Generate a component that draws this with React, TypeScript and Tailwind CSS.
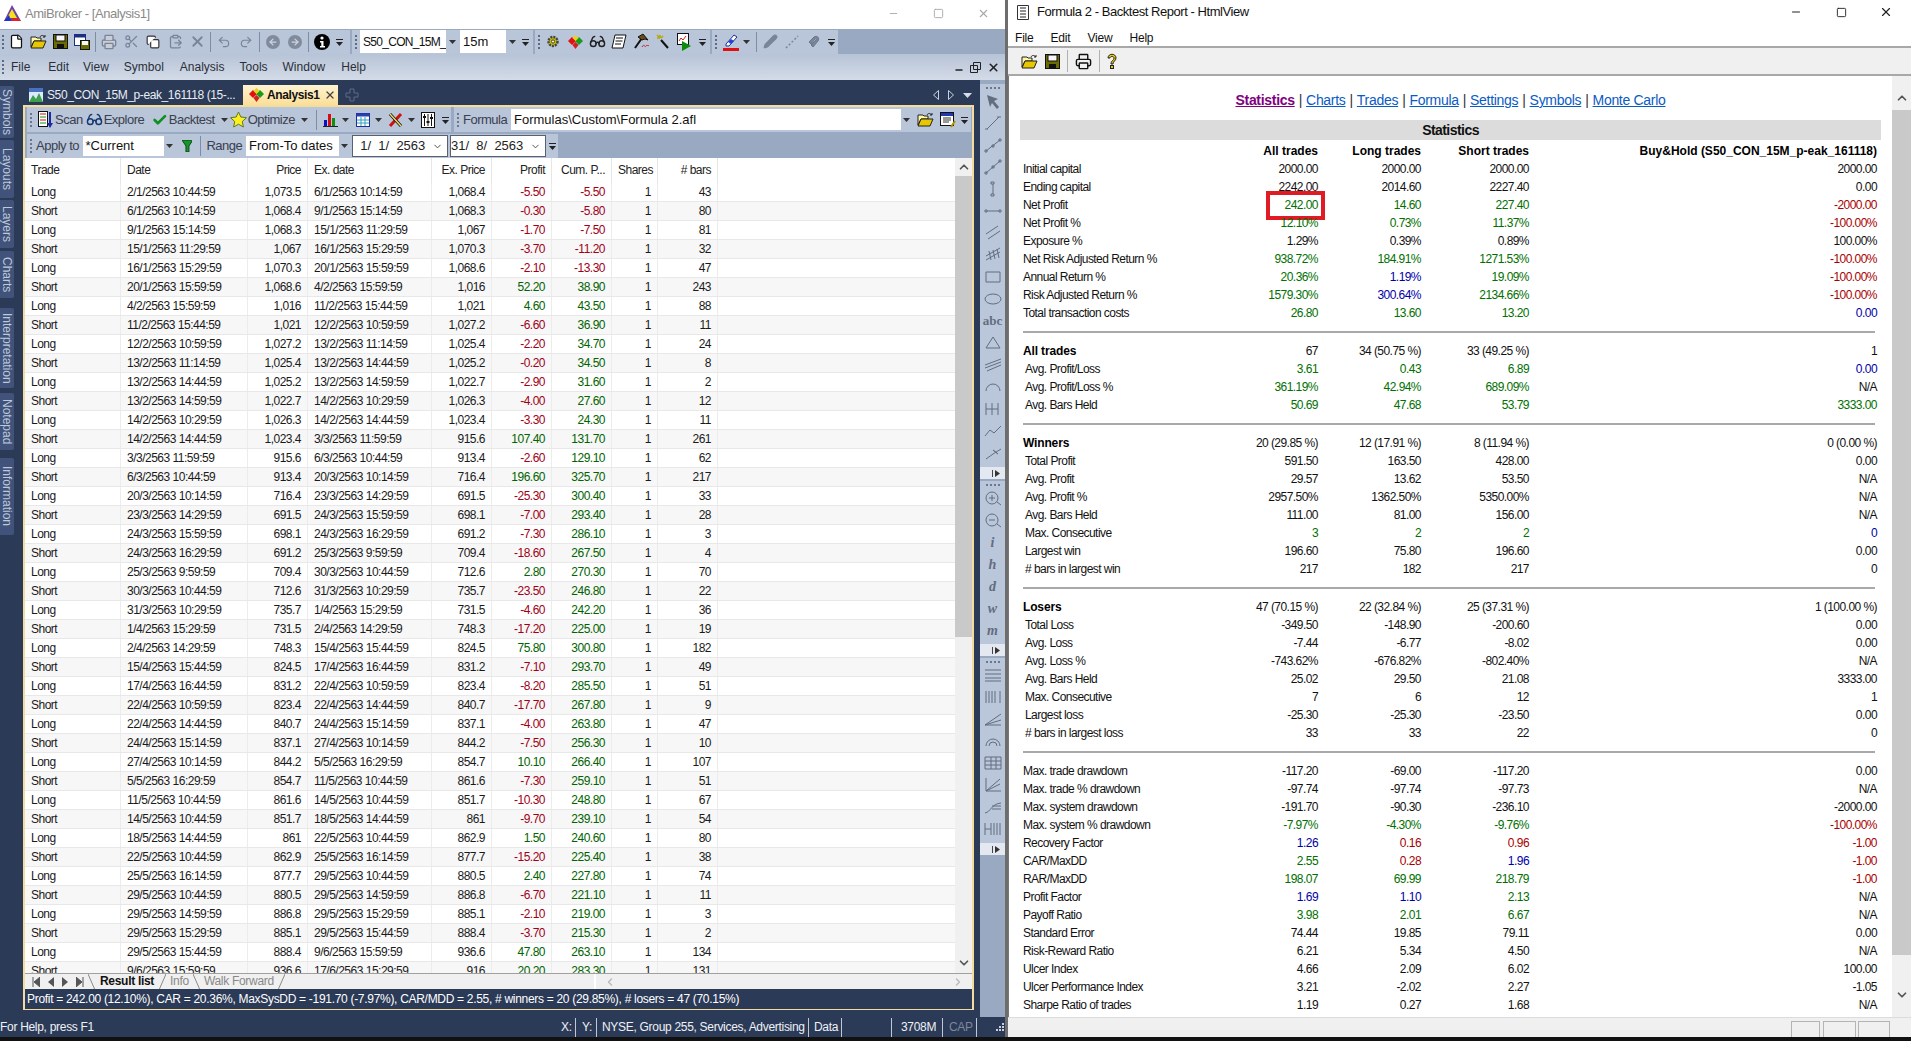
import type { ReactNode } from 'react'
import {
  ArrowLeft, ArrowRight, Check, ChevronDown, ChevronLeft, ChevronRight, ChevronUp, ClipboardPaste, Copy,
  File, Glasses, Minus, Pencil, Printer, Redo2, Scissors, Square, Undo2, X,
} from 'lucide-react'

type Trade = [string, string, string, string, string, string, string, string]

const TRADES: Trade[] = [
  ['Long', '2/1/2563 10:44:59', '1,073.5', '6/1/2563 10:14:59', '1,068.4', '-5.50', '-5.50', '43'],
  ['Short', '6/1/2563 10:14:59', '1,068.4', '9/1/2563 15:14:59', '1,068.3', '-0.30', '-5.80', '80'],
  ['Long', '9/1/2563 15:14:59', '1,068.3', '15/1/2563 11:29:59', '1,067', '-1.70', '-7.50', '81'],
  ['Short', '15/1/2563 11:29:59', '1,067', '16/1/2563 15:29:59', '1,070.3', '-3.70', '-11.20', '32'],
  ['Long', '16/1/2563 15:29:59', '1,070.3', '20/1/2563 15:59:59', '1,068.6', '-2.10', '-13.30', '47'],
  ['Short', '20/1/2563 15:59:59', '1,068.6', '4/2/2563 15:59:59', '1,016', '52.20', '38.90', '243'],
  ['Long', '4/2/2563 15:59:59', '1,016', '11/2/2563 15:44:59', '1,021', '4.60', '43.50', '88'],
  ['Short', '11/2/2563 15:44:59', '1,021', '12/2/2563 10:59:59', '1,027.2', '-6.60', '36.90', '11'],
  ['Long', '12/2/2563 10:59:59', '1,027.2', '13/2/2563 11:14:59', '1,025.4', '-2.20', '34.70', '24'],
  ['Short', '13/2/2563 11:14:59', '1,025.4', '13/2/2563 14:44:59', '1,025.2', '-0.20', '34.50', '8'],
  ['Long', '13/2/2563 14:44:59', '1,025.2', '13/2/2563 14:59:59', '1,022.7', '-2.90', '31.60', '2'],
  ['Short', '13/2/2563 14:59:59', '1,022.7', '14/2/2563 10:29:59', '1,026.3', '-4.00', '27.60', '12'],
  ['Long', '14/2/2563 10:29:59', '1,026.3', '14/2/2563 14:44:59', '1,023.4', '-3.30', '24.30', '11'],
  ['Short', '14/2/2563 14:44:59', '1,023.4', '3/3/2563 11:59:59', '915.6', '107.40', '131.70', '261'],
  ['Long', '3/3/2563 11:59:59', '915.6', '6/3/2563 10:44:59', '913.4', '-2.60', '129.10', '62'],
  ['Short', '6/3/2563 10:44:59', '913.4', '20/3/2563 10:14:59', '716.4', '196.60', '325.70', '217'],
  ['Long', '20/3/2563 10:14:59', '716.4', '23/3/2563 14:29:59', '691.5', '-25.30', '300.40', '33'],
  ['Short', '23/3/2563 14:29:59', '691.5', '24/3/2563 15:59:59', '698.1', '-7.00', '293.40', '28'],
  ['Long', '24/3/2563 15:59:59', '698.1', '24/3/2563 16:29:59', '691.2', '-7.30', '286.10', '3'],
  ['Short', '24/3/2563 16:29:59', '691.2', '25/3/2563 9:59:59', '709.4', '-18.60', '267.50', '4'],
  ['Long', '25/3/2563 9:59:59', '709.4', '30/3/2563 10:44:59', '712.6', '2.80', '270.30', '70'],
  ['Short', '30/3/2563 10:44:59', '712.6', '31/3/2563 10:29:59', '735.7', '-23.50', '246.80', '22'],
  ['Long', '31/3/2563 10:29:59', '735.7', '1/4/2563 15:29:59', '731.5', '-4.60', '242.20', '36'],
  ['Short', '1/4/2563 15:29:59', '731.5', '2/4/2563 14:29:59', '748.3', '-17.20', '225.00', '19'],
  ['Long', '2/4/2563 14:29:59', '748.3', '15/4/2563 15:44:59', '824.5', '75.80', '300.80', '182'],
  ['Short', '15/4/2563 15:44:59', '824.5', '17/4/2563 16:44:59', '831.2', '-7.10', '293.70', '49'],
  ['Long', '17/4/2563 16:44:59', '831.2', '22/4/2563 10:59:59', '823.4', '-8.20', '285.50', '51'],
  ['Short', '22/4/2563 10:59:59', '823.4', '22/4/2563 14:44:59', '840.7', '-17.70', '267.80', '9'],
  ['Long', '22/4/2563 14:44:59', '840.7', '24/4/2563 15:14:59', '837.1', '-4.00', '263.80', '47'],
  ['Short', '24/4/2563 15:14:59', '837.1', '27/4/2563 10:14:59', '844.2', '-7.50', '256.30', '10'],
  ['Long', '27/4/2563 10:14:59', '844.2', '5/5/2563 16:29:59', '854.7', '10.10', '266.40', '107'],
  ['Short', '5/5/2563 16:29:59', '854.7', '11/5/2563 10:44:59', '861.6', '-7.30', '259.10', '51'],
  ['Long', '11/5/2563 10:44:59', '861.6', '14/5/2563 10:44:59', '851.7', '-10.30', '248.80', '67'],
  ['Short', '14/5/2563 10:44:59', '851.7', '18/5/2563 14:44:59', '861', '-9.70', '239.10', '54'],
  ['Long', '18/5/2563 14:44:59', '861', '22/5/2563 10:44:59', '862.9', '1.50', '240.60', '80'],
  ['Short', '22/5/2563 10:44:59', '862.9', '25/5/2563 16:14:59', '877.7', '-15.20', '225.40', '38'],
  ['Long', '25/5/2563 16:14:59', '877.7', '29/5/2563 10:44:59', '880.5', '2.40', '227.80', '74'],
  ['Short', '29/5/2563 10:44:59', '880.5', '29/5/2563 14:59:59', '886.8', '-6.70', '221.10', '11'],
  ['Long', '29/5/2563 14:59:59', '886.8', '29/5/2563 15:29:59', '885.1', '-2.10', '219.00', '3'],
  ['Short', '29/5/2563 15:29:59', '885.1', '29/5/2563 15:44:59', '888.4', '-3.70', '215.30', '2'],
  ['Long', '29/5/2563 15:44:59', '888.4', '9/6/2563 15:59:59', '936.6', '47.80', '263.10', '134'],
  ['Short', '9/6/2563 15:59:59', '936.6', '17/6/2563 15:29:59', '916', '20.20', '283.30', '131'],
]

const COLS = 'grid grid-cols-[96px_127px_60px_124px_60px_60px_60px_46px_60px_1fr]'
const RED = 'text-[#a00018]'
const GREEN = 'text-[#006400]'

function signColor(v: string) {
  return v.startsWith('-') ? RED : GREEN
}

function TradeRow({ t, index }: { t: Trade; index: number }) {
  const cell = 'px-[6px] border-r border-[#ececec] leading-[18px] whitespace-nowrap'
  return (
    <div className={`${COLS} h-[19px] shrink-0 border-b border-[#e8e8e8] text-[#1a1a1a] ${index % 2 ? 'bg-[#f7f7f7]' : 'bg-white'}`}>
      <div className={cell}>{t[0]}</div>
      <div className={cell}>{t[1]}</div>
      <div className={`${cell} text-right`}>{t[2]}</div>
      <div className={cell}>{t[3]}</div>
      <div className={`${cell} text-right`}>{t[4]}</div>
      <div className={`${cell} text-right ${signColor(t[5])}`}>{t[5]}</div>
      <div className={`${cell} text-right ${signColor(t[6])}`}>{t[6]}</div>
      <div className={`${cell} text-right`}>1</div>
      <div className={`${cell} text-right`}>{t[7]}</div>
      <div />
    </div>
  )
}

function Grip({ dark }: { dark?: boolean }) {
  return (
    <span className="flex w-[2px] shrink-0 flex-col gap-[2px]">
      {[0, 1, 2, 3].map((i) => (
        <span key={i} className={`h-[2px] w-[2px] ${dark ? 'bg-[#5d6a82]' : 'bg-[#6a778f]'}`} />
      ))}
    </span>
  )
}

function Overflow() {
  return (
    <svg width="10" height="12" viewBox="0 0 10 12" className="shrink-0">
      <rect x="1" y="3" width="7" height="1" fill="#222" />
      <path d="M1 6h7L4.5 10z" fill="#222" />
    </svg>
  )
}

function Caret({ className = '' }: { className?: string }) {
  return (
    <svg width="7" height="4" viewBox="0 0 7 4" className={`shrink-0 ${className}`}>
      <path d="M0 0h7L3.5 4z" fill="#333" />
    </svg>
  )
}

function Btn({ children, w = 'w-[22px]' }: { children: ReactNode; w?: string }) {
  return <span className={`flex h-[22px] ${w} shrink-0 items-center justify-center`}>{children}</span>
}

function Sep() {
  return <span className="mx-[2px] block h-[20px] w-[1px] shrink-0 bg-[#7f8ca3]" />
}

function FolderIcon() {
  return (
    <svg width="17" height="15" viewBox="0 0 17 15">
      <path d="M1 13V3h5l1 1h4v3H4z" fill="#fff6a8" stroke="#222" />
      <path d="M1 14l3-7h12l-3 7z" fill="#e6c700" stroke="#222" />
      <path d="M10 3c1-2 3-2 5 0M15 3v-2M15 3h-2" fill="none" stroke="#222" />
    </svg>
  )
}

function SaveIcon() {
  return (
    <svg width="15" height="15" viewBox="0 0 15 15">
      <rect x="0.5" y="0.5" width="14" height="14" fill="#6b6b00" stroke="#111" />
      <rect x="3" y="1" width="9" height="6" fill="#f6f6f6" stroke="#111" />
      <rect x="4" y="10" width="7" height="4" fill="#111" />
    </svg>
  )
}

function SaveAllIcon() {
  return (
    <svg width="16" height="16" viewBox="0 0 16 16">
      <rect x="0.5" y="0.5" width="11" height="11" fill="#fff" stroke="#1c2f80" />
      <rect x="0.5" y="0.5" width="11" height="3" fill="#1c2f80" />
      <rect x="6.5" y="6.5" width="9" height="9" fill="#6b6b00" stroke="#111" />
      <rect x="8" y="7" width="6" height="4" fill="#f6f6f6" />
    </svg>
  )
}

function InfoIcon() {
  return (
    <svg width="16" height="16" viewBox="0 0 16 16">
      <circle cx="8" cy="8" r="8" fill="#000" />
      <circle cx="8" cy="4" r="1.6" fill="#fff" />
      <path d="M6 7h3.5v5H11v1.5H6V12h1.3V8.5H6z" fill="#fff" />
    </svg>
  )
}

function CircleArrow({ right }: { right?: boolean }) {
  return (
    <span className="flex h-[14px] w-[14px] items-center justify-center rounded-full bg-[#808b9d]">
      {right ? <ArrowRight size={10} color="#cfd6e2" strokeWidth={3} /> : <ArrowLeft size={10} color="#cfd6e2" strokeWidth={3} />}
    </span>
  )
}

function LogoIcon() {
  return (
    <svg width="17" height="18" viewBox="0 0 17 18">
      <path d="M8 0l9 16H0z" fill="#6b3fb0" />
      <path d="M8 4l5 9H3z" fill="#f4e11c" />
      <path d="M0 16l5-6 2 6z" fill="#2233c8" />
      <path d="M17 16H7l2-3h5z" fill="#e02424" />
    </svg>
  )
}

function DiamondsIcon() {
  return (
    <svg width="15" height="14" viewBox="0 0 15 14">
      <path d="M4 2l4 4-4 4-4-4z" fill="#e01010" />
      <path d="M11 2l4 4-4 4-4-4z" fill="#1a9a1a" />
      <path d="M7.5 0l3 3-3 3-3-3z" fill="#e8d020" />
      <path d="M7.5 7l3 3-3 4-3-4z" fill="#d02020" />
    </svg>
  )
}

function GearIcon() {
  return (
    <svg width="14" height="15" viewBox="0 0 14 15">
      <circle cx="7" cy="7.5" r="4.5" fill="#c7c200" stroke="#444" strokeDasharray="2 1" strokeWidth="2.4" />
      <circle cx="7" cy="7.5" r="1.6" fill="#eee" stroke="#444" />
    </svg>
  )
}

function ScrollIcon() {
  return (
    <svg width="16" height="16" viewBox="0 0 16 16">
      <path d="M4 1h11l-3 13H1z" fill="#fff" stroke="#111" />
      <path d="M5 4h7M4.5 7h7M4 10h6" stroke="#111" />
    </svg>
  )
}

function HammerIcon() {
  return (
    <svg width="17" height="17" viewBox="0 0 17 17">
      <path d="M2 15L9 5" stroke="#111" strokeWidth="2" />
      <path d="M5 4l5-3 5 6-3-1-3 1z" fill="#6b4a12" stroke="#111" />
      <path d="M9 14c2-4 3 1 4-1s2 1 3-1" fill="none" stroke="#d02020" />
    </svg>
  )
}

function WandIcon() {
  return (
    <svg width="14" height="15" viewBox="0 0 14 15">
      <path d="M5 6l7 8" stroke="#111" strokeWidth="2" />
      <path d="M4 1v3M1 4h3M7 2L5 4M1 1l2 2" stroke="#b8a800" strokeWidth="1.5" />
    </svg>
  )
}

function RunIcon() {
  return (
    <svg width="16" height="18" viewBox="0 0 16 18">
      <rect x="0.5" y="0.5" width="11" height="11" fill="#fff" stroke="#111" />
      <path d="M2 8l2-3 2 2 3-4" fill="none" stroke="#d02020" />
      <path d="M5 8l9 5-9 5z" fill="#0e8a0e" />
    </svg>
  )
}

function PenRedIcon() {
  return (
    <svg width="17" height="18" viewBox="0 0 17 18">
      <path d="M3 11l8-9 3 2-8 9H3z" fill="#fff" stroke="#1c2f9a" />
      <path d="M8 6l3 2-3 3-3-2z" fill="#2244d0" />
      <rect x="0" y="15" width="16" height="3" fill="#e01010" />
    </svg>
  )
}

function MagnetIcon() {
  return (
    <svg width="14" height="14" viewBox="0 0 14 14">
      <path d="M2 7l5-5c3-2 6 1 4 4l-5 6-2-2 5-5c1-1 0-2-1-1L4 9z" fill="#7a8699" stroke="#6a7589" />
    </svg>
  )
}

function ScanIcon() {
  return (
    <svg width="15" height="18" viewBox="0 0 15 18">
      <rect x="0.5" y="0.5" width="9" height="15" fill="#fff" stroke="#111" />
      <path d="M2 3h6" stroke="#d01010" />
      <path d="M2 6h6" stroke="#109010" />
      <path d="M2 9h6" stroke="#d01010" />
      <path d="M2 12h6" stroke="#109010" />
      <path d="M12 1v12" stroke="#1a2aa0" strokeWidth="2" />
      <path d="M9 12h6l-3 5z" fill="#1a2aa0" />
    </svg>
  )
}

function StarIcon() {
  return (
    <svg width="17" height="17" viewBox="0 0 17 17">
      <path d="M8.5 1l2.3 5 5.7.7-4.2 3.8 1.1 5.5-4.9-2.8-4.9 2.8 1.1-5.5L.5 6.7 6.2 6z" fill="#ffee20" stroke="#5b7a20" />
    </svg>
  )
}

function BarsIcon() {
  return (
    <svg width="15" height="15" viewBox="0 0 15 15">
      <rect x="1" y="8" width="3" height="6" fill="#1010c0" />
      <rect x="5" y="2" width="3" height="12" fill="#d01010" />
      <rect x="9" y="6" width="3" height="8" fill="#109010" />
      <rect x="0" y="14" width="15" height="1" fill="#222" />
    </svg>
  )
}

function TableIcon() {
  return (
    <svg width="14" height="14" viewBox="0 0 14 14">
      <rect x="0.5" y="0.5" width="13" height="13" fill="#fff" stroke="#1c2f9a" />
      <rect x="0.5" y="0.5" width="13" height="3" fill="#2a3fb0" />
      <path d="M5 4v9M9 4v9M1 7h12M1 10h12" stroke="#30a0c0" />
    </svg>
  )
}

function ToolsIcon() {
  return (
    <svg width="18" height="18" viewBox="0 0 18 18">
      <path d="M3 15L14 3" stroke="#d01010" strokeWidth="3" />
      <path d="M3 3l11 12" stroke="#111" strokeWidth="3" />
      <path d="M3 3l11 12" stroke="#f0e060" strokeWidth="1.4" />
    </svg>
  )
}

function SlidersIcon() {
  return (
    <svg width="14" height="16" viewBox="0 0 14 16">
      <rect x="0.5" y="0.5" width="13" height="15" fill="#fff" stroke="#111" />
      <path d="M3.5 2v12M7 2v12M10.5 2v12" stroke="#111" />
      <path d="M2 5h3M5.500 10h3M9 6h3" stroke="#111" strokeWidth="2" />
    </svg>
  )
}

function EditIcon() {
  return (
    <svg width="16" height="16" viewBox="0 0 16 16">
      <rect x="0.5" y="0.5" width="13" height="13" fill="#fff" stroke="#111" />
      <rect x="1" y="1" width="12" height="3" fill="#2238b0" />
      <path d="M3 6h8M3 8h8M3 10h6" stroke="#333" />
      <path d="M11 15l4-6" stroke="#b09000" strokeWidth="2" />
    </svg>
  )
}

function Field({ children, w }: { children: ReactNode; w: string }) {
  return (
    <span className={`flex h-[20px] ${w} shrink-0 items-center bg-white pl-[3px] tracking-normal text-[#111]`}>
      <span className="flex-1 whitespace-nowrap">{children}</span>
      <span className="flex h-[20px] w-[11px] shrink-0 items-center justify-center bg-[#b9c5d8]">
        <Caret />
      </span>
    </span>
  )
}

function DateField({ value, w }: { value: string; w: string }) {
  return (
    <span className={`flex h-[22px] ${w} shrink-0 items-center border border-[#59606e] bg-white pr-[4px] whitespace-pre tracking-normal text-[#222]`}>
      <span className="flex-1">{value}</span>
      <ChevronDown size={11} color="#444" />
    </span>
  )
}

function TopToolbar() {
  const group = 'flex h-[24px] shrink-0 items-center bg-[#b9c5d8]'
  const gray = '#79849a'
  return (
    <div className="flex h-[25px] shrink-0 items-center gap-[2px] bg-[#9aa9c2]">
      <div className={`${group} w-[350px] pl-[2px]`}>
        <Grip dark />
        <span className="w-[1px]" />
        <Btn><File size={15} color="#111" fill="#fff" /></Btn>
        <Btn><FolderIcon /></Btn>
        <Btn><SaveIcon /></Btn>
        <Btn><SaveAllIcon /></Btn>
        <Sep />
        <Btn><Printer size={16} color={gray} fill="#c8cdd6" /></Btn>
        <Btn><Scissors size={15} color={gray} /></Btn>
        <Btn><Copy size={14} color="#333" fill="#fff" /></Btn>
        <Btn><ClipboardPaste size={15} color={gray} /></Btn>
        <Btn><X size={17} color={gray} strokeWidth={2.5} /></Btn>
        <Sep />
        <Btn><Undo2 size={14} color={gray} /></Btn>
        <Btn><Redo2 size={14} color={gray} /></Btn>
        <Sep />
        <Btn><CircleArrow /></Btn>
        <Btn><CircleArrow right /></Btn>
        <Sep />
        <Btn><InfoIcon /></Btn>
        <span className="ml-[2px]"><Overflow /></span>
      </div>
      <div className={`${group} w-[181px] pl-[3px]`}>
        <Grip dark />
        <span className="w-[3px]" />
        <span className="flex h-[23px] w-[98px] shrink-0 items-center bg-white pl-[3px] text-[12px] tracking-[-0.7px] text-[#111]">
          <span className="flex-1 whitespace-nowrap">S50_CON_15M_</span>
          <span className="flex h-[23px] w-[12px] shrink-0 items-center justify-center bg-[#b9c5d8]"><Caret /></span>
        </span>
        <span className="w-[2px]" />
        <span className="flex h-[23px] w-[58px] shrink-0 items-center bg-white pl-[3px] text-[13px] text-[#111]">
          <span className="flex-1">15m</span>
          <span className="flex h-[23px] w-[12px] shrink-0 items-center justify-center bg-[#b9c5d8]"><Caret /></span>
        </span>
        <span className="ml-[3px]"><Overflow /></span>
      </div>
      <div className={`${group} w-[175px] pl-[3px]`}>
        <Grip dark />
        <span className="w-[2px]" />
        <Btn><GearIcon /></Btn>
        <Btn><DiamondsIcon /></Btn>
        <Btn><Glasses size={17} color="#222" /></Btn>
        <Btn><ScrollIcon /></Btn>
        <Btn><HammerIcon /></Btn>
        <Btn><WandIcon /></Btn>
        <Btn><RunIcon /></Btn>
        <span className="ml-[2px]"><Overflow /></span>
      </div>
      <div className={`${group} w-[126px] pl-[3px]`}>
        <Grip dark />
        <span className="w-[3px]" />
        <Btn><PenRedIcon /></Btn>
        <Caret className="ml-[1px]" />
        <span className="w-[4px]" />
        <Sep />
        <Btn><Pencil size={15} color={gray} fill={gray} /></Btn>
        <Btn>
          <svg width="14" height="14" viewBox="0 0 14 14"><path d="M1 13L13 1" stroke={gray} strokeWidth="1.5" strokeDasharray="2 2" /></svg>
        </Btn>
        <Btn><MagnetIcon /></Btn>
        <span className="ml-[2px]"><Overflow /></span>
      </div>
    </div>
  )
}

function MenuBar() {
  const items: [string, string][] = [
    ['File', 'ml-[7px]'], ['Edit', 'ml-[18px]'], ['View', 'ml-[14px]'], ['Symbol', 'ml-[15px]'],
    ['Analysis', 'ml-[16px]'], ['Tools', 'ml-[15px]'], ['Window', 'ml-[15px]'], ['Help', 'ml-[16px]'],
  ]
  return (
    <div className="flex h-[26px] shrink-0 items-center bg-linear-to-b from-[#b7c3d7] to-[#d3dbe7] pl-[2px] text-[12px] text-[#2a2f3a]">
      <Grip dark />
      {items.map(([t, c]) => (
        <span key={t} className={c}>{t}</span>
      ))}
      <span className="ml-auto flex items-center gap-[6px] pr-[5px]">
        <Minus size={10} color="#222" strokeWidth={4} className="mt-[6px]" />
        <svg width="11" height="11" viewBox="0 0 11 11"><path d="M3.5 .5h7v7h-7zM.5 3.5h7v7h-7z" fill="none" stroke="#222" /></svg>
        <X size={13} color="#222" strokeWidth={3} />
      </span>
    </div>
  )
}

function SideTab({ label, h }: { label: string; h: string }) {
  return (
    <div className={`flex w-[14px] ${h} shrink-0 items-center justify-center rounded-r-[2px] bg-[#41537a] text-[12px] text-[#bcc8dc] [writing-mode:vertical-rl]`}>
      {label}
    </div>
  )
}

function SideRail() {
  return (
    <div className="flex w-[23px] shrink-0 flex-col pt-[6px]">
      <SideTab label="Symbols" h="h-[52px]" />
      <div className="h-[2px]" />
      <SideTab label="Layouts" h="h-[58px]" />
      <div className="h-[2px]" />
      <SideTab label="Layers" h="h-[48px]" />
      <div className="h-[3px]" />
      <SideTab label="Charts" h="h-[47px]" />
      <div className="h-[10px]" />
      <SideTab label="Interpretation" h="h-[80px]" />
      <div className="h-[5px]" />
      <SideTab label="Notepad" h="h-[57px]" />
      <div className="h-[8px]" />
      <SideTab label="Information" h="h-[77px]" />
    </div>
  )
}

function DocTabs() {
  return (
    <div className="flex h-[20px] shrink-0 items-center text-[12px] tracking-[-0.4px]">
      <svg width="14" height="14" viewBox="0 0 14 14" className="ml-[6px]">
        <rect width="14" height="14" fill="#dbeafe" />
        <rect width="14" height="4" fill="#4a70c0" />
        <path d="M0 14l4-7 3 4 3-6 4 9z" fill="#3aa04a" />
      </svg>
      <span className="ml-[4px] w-[196px] whitespace-nowrap text-[#e8ecf3]">S50_CON_15M_p-eak_161118 (15-...</span>
      <span className="flex h-[20px] w-[95px] items-center bg-linear-to-b from-[#fff3d0] to-[#fbdf98] pl-[6px] font-bold text-[#111]">
        <DiamondsIcon />
        <span className="ml-[3px]">Analysis1</span>
        <X size={12} color="#444" className="ml-[5px]" strokeWidth={2.5} />
      </span>
      <svg width="14" height="14" viewBox="0 0 14 14" className="ml-[7px]">
        <path d="M5 1h4v4h4v4H9v4H5V9H1V5h4z" fill="none" stroke="#5b6a88" />
      </svg>
      <span className="ml-auto flex items-center gap-[9px] pr-[2px]">
        <svg width="6" height="10" viewBox="0 0 6 10"><path d="M5.5 .5v9L.5 5z" fill="none" stroke="#c8d0de" /></svg>
        <svg width="6" height="10" viewBox="0 0 6 10"><path d="M.5 .5v9l5-4.500z" fill="none" stroke="#c8d0de" /></svg>
        <svg width="9" height="5" viewBox="0 0 9 5"><path d="M0 0h9L4.500 5z" fill="#d6dde8" /></svg>
      </span>
    </div>
  )
}

function PanelToolbars() {
  const group = 'flex shrink-0 items-center bg-[#b9c5d8] text-[#39404f]'
  return (
    <div className="flex h-[51px] shrink-0 flex-col gap-[2px] bg-[#9aa9c2] pl-[2px] text-[13px] tracking-[-0.5px]">
      <div className="flex h-[25px] gap-[3px]">
        <div className={`${group} w-[424px] pl-[3px]`}>
          <Grip />
          <span className="ml-[6px]"><ScanIcon /></span>
          <span className="ml-[2px]">Scan</span>
          <span className="ml-[3px]"><Glasses size={17} color="#163a70" /></span>
          <span className="ml-[1px]">Explore</span>
          <Check size={18} color="#0f8f20" strokeWidth={4} className="ml-[8px]" />
          <span className="ml-[1px]">Backtest</span>
          <Caret className="ml-[6px]" />
          <span className="ml-[2px]"><StarIcon /></span>
          <span className="ml-[1px]">Optimize</span>
          <Caret className="ml-[6px]" />
          <span className="ml-[6px]"><Sep /></span>
          <span className="ml-[4px]"><BarsIcon /></span>
          <Caret className="ml-[4px]" />
          <span className="ml-[7px]"><TableIcon /></span>
          <Caret className="ml-[5px]" />
          <span className="ml-[5px]"><ToolsIcon /></span>
          <Caret className="ml-[3px]" />
          <span className="ml-[6px]"><SlidersIcon /></span>
          <span className="ml-[6px]"><Overflow /></span>
        </div>
        <div className={`${group} w-[517px] pl-[3px]`}>
          <Grip />
          <span className="ml-[4px] w-[48px]">Formula</span>
          <span className="flex h-[21px] w-[401px] shrink-0 items-center bg-white pl-[3px] tracking-normal text-[#111]">
            <span className="flex-1">Formulas\Custom\Formula 2.afl</span>
            <span className="flex h-[21px] w-[11px] items-center justify-center bg-[#b9c5d8]"><Caret /></span>
          </span>
          <span className="ml-[5px]"><FolderIcon /></span>
          <span className="ml-[6px]"><EditIcon /></span>
          <span className="ml-[4px]"><Overflow /></span>
        </div>
      </div>
      <div className={`${group} h-[24px] w-[531px] pl-[3px]`}>
        <Grip />
        <span className="ml-[4px] w-[47px] whitespace-nowrap">Apply to</span>
        <Field w="w-[92px]">*Current</Field>
        <svg width="11" height="12" viewBox="0 0 11 12" className="ml-[7px]">
          <path d="M0 0h11L7 6v6H4V6z" fill="#14962a" stroke="#0a4a12" />
        </svg>
        <span className="ml-[6px]"><Sep /></span>
        <span className="ml-[3px] w-[40px]">Range</span>
        <Field w="w-[104px]">From-To dates</Field>
        <span className="w-[2px]" />
        <DateField w="w-[96px]" value="  1/  1/  2563" />
        <span className="w-[2px]" />
        <DateField w="w-[96px]" value="31/  8/  2563" />
        <span className="ml-[2px]"><Overflow /></span>
      </div>
    </div>
  )
}

function TableHeader() {
  const cell = 'px-[6px] border-r border-[#e6e6e6] leading-[25px] whitespace-nowrap'
  return (
    <div className={`${COLS} h-[25px] shrink-0 bg-white text-[#222]`}>
      <div className={cell}>Trade</div>
      <div className={cell}>Date</div>
      <div className={`${cell} text-right`}>Price</div>
      <div className={cell}>Ex. date</div>
      <div className={`${cell} text-right`}>Ex. Price</div>
      <div className={`${cell} text-right`}>Profit</div>
      <div className={`${cell} text-right`}>Cum. P...</div>
      <div className={`${cell} text-right`}>Shares</div>
      <div className={`${cell} text-right`}>{'# bars'}</div>
      <div />
    </div>
  )
}

function VScroll({ w, top, thumb, bottom }: { w: string; top: string; thumb: string; bottom: string }) {
  return (
    <div className={`flex ${w} shrink-0 flex-col items-center bg-[#f0f0f0]`}>
      <div className={`flex ${top} shrink-0 items-center`}><ChevronUp size={14} color="#555" strokeWidth={3} /></div>
      <div className={`w-full ${thumb} shrink-0 bg-[#c9c9c9]`} />
      <div className="flex-1" />
      <div className={`flex ${bottom} shrink-0 items-center`}><ChevronDown size={14} color="#555" strokeWidth={3} /></div>
    </div>
  )
}

function TabEdge({ flip }: { flip?: boolean }) {
  return (
    <svg width="7" height="16" viewBox="0 0 7 16" className="shrink-0">
      <path d={flip ? 'M7 0L0 16' : 'M0 0l7 16'} stroke="#8a8a8a" fill="none" />
    </svg>
  )
}

function BottomTabs() {
  return (
    <div className="flex h-[16px] shrink-0 items-center border-t border-[#a0a0a0] bg-[#f0f0f0] text-[12px] leading-[13px] tracking-[-0.3px]">
      <div className="ml-[3px] flex w-[60px] items-center justify-around text-[#444]">
        <svg width="8" height="10" viewBox="0 0 8 10"><path d="M1 0v10M8 0v10L2 5z" stroke="#555" fill="#555" /></svg>
        <svg width="6" height="10" viewBox="0 0 6 10"><path d="M6 0v10L0 5z" fill="#555" /></svg>
        <svg width="6" height="10" viewBox="0 0 6 10"><path d="M0 0v10l6-5z" fill="#555" /></svg>
        <svg width="8" height="10" viewBox="0 0 8 10"><path d="M7 0v10M0 0v10l6-5z" stroke="#555" fill="#555" /></svg>
      </div>
      <TabEdge />
      <span className="mx-[5px] font-bold text-[#111]">Result list</span>
      <TabEdge flip />
      <span className="mx-[4px] text-[#888]">Info</span>
      <TabEdge />
      <span className="mx-[4px] text-[#888]">Walk Forward</span>
      <TabEdge flip />
      <div className="ml-auto flex h-[16px] w-[378px] items-center justify-between border-l-2 border-white px-[8px]">
        <ChevronLeft size={12} color="#bbb" strokeWidth={3} />
        <ChevronRight size={12} color="#bbb" strokeWidth={3} />
      </div>
    </div>
  )
}

function Panel() {
  return (
    <div className="flex min-h-0 w-[951px] flex-1 flex-col border-2 border-b-[1px] border-[#f4dc9c] text-[12px] tracking-[-0.5px]">
      <PanelToolbars />
      <div className="flex min-h-0 flex-1">
        <div className="flex min-h-0 w-[930px] shrink-0 flex-col overflow-hidden bg-white">
          <TableHeader />
          {TRADES.map((t, i) => (
            <TradeRow key={t[1]} t={t} index={i} />
          ))}
        </div>
        <VScroll w="w-[17px]" top="h-[18px]" thumb="h-[461px]" bottom="h-[20px]" />
      </div>
      <BottomTabs />
      <div className="flex h-[20px] shrink-0 items-center bg-[#2b3a57] pl-[2px] whitespace-nowrap text-[12px] tracking-[-0.3px] text-white">
        Profit = 242.00 (12.10%), CAR = 20.36%, MaxSysDD = -191.70 (-7.97%), CAR/MDD = 2.55, # winners = 20 (29.85%), # losers = 47 (70.15%)
      </div>
    </div>
  )
}

function RailLine({ d }: { d: string }) {
  return (
    <span className="flex h-[22px] items-center justify-center">
      <svg width="18" height="16" viewBox="0 0 18 16">
        <path d={d} fill="none" stroke="#626d80" />
      </svg>
    </span>
  )
}

function RailText({ t, bold }: { t: string; bold?: boolean }) {
  return (
    <span className={`flex h-[22px] items-center justify-center text-[#626d80] ${bold ? "font-['Liberation_Serif',serif] text-[13px] font-bold" : "font-['Liberation_Serif',serif] text-[14px] font-bold italic"}`}>
      {t}
    </span>
  )
}

function RailFoot() {
  return (
    <div className="mt-[3px] flex h-[12px] items-center justify-end gap-[2px] bg-[#e4e9f1] pr-[5px]">
      <span className="h-[7px] w-[1px] bg-[#444]" />
      <svg width="5" height="7" viewBox="0 0 5 7"><path d="M0 0v7l5-3.500z" fill="#333" /></svg>
    </div>
  )
}

function RailDots() {
  return (
    <div className="flex h-[6px] items-center justify-center gap-[2px] pt-[2px]">
      {[0, 1, 2, 3].map((i) => (
        <span key={i} className="h-[2px] w-[2px] bg-[#6a778f]" />
      ))}
    </div>
  )
}

const DRAW_A = [
  'M3 14L15 2M1 14h3M13 2h4',
  'M2 14l14-11M1 13h2v2H1zM8 8h2v2H8zM15 2h2v2h-2z',
  'M2 14l14-12M1 13h2v2H1zM8 7h2v2H8zM15 1h2v2h-2z',
  'M9 3v10M7 1h3v2H7zM7 13h3v2H7z',
  'M3 8h12M1 7h2v2H1zM15 7h2v2h-2z',
  'M2 9L14 1M4 14L16 6',
  'M2 13L16 5M2 9l14-8M5 4l2 9M9 3l2 9M13 2l2 9',
  'M2 3h14v10H2z',
  'M1 8a8 5 0 1 0 16 0a8 5 0 1 0-16 0',
]
const DRAW_B = [
  'M2 13L9 2l7 11z',
  'M1 11l16-6M1 8l16-6M3 14l14-6',
  'M2 12a7 7 0 0 1 14 0',
  'M2 2v12M8 2v12M14 2v12M2 8h12',
  'M1 13l5-6 4 3 7-7',
  'M2 14l7-5M9 9l8-5M9 5l5 4z',
]
const DRAW_C = [
  'M1 3h16M1 7h16M1 11h16M1 14h16',
  'M2 2v12M5 2v12M8 2v12M11 2v12M16 2v12',
  'M1 14L17 3M1 14l16-5M1 14h16',
  'M2 13a7 7 0 0 1 14 0M5 13a4 4 0 0 1 8 0',
  'M1 2h16v12H1zM1 6h16M1 10h16M7 2v12M12 2v12',
  'M2 1v13h15M2 14L16 2M2 14l14-7',
  'M1 14c6-1 6-9 16-10M8 7h9M8 10h9',
  'M1 2v12M1 8h6M7 2v12M10 2v12M13 2v12M16 2v12',
]

function DrawRail() {
  return (
    <div className="flex w-[25px] shrink-0 flex-col gap-[2px] bg-[#9aa9c2] pt-[4px]">
      <div className="bg-[#bac6d9]">
        <RailDots />
        <span className="flex h-[22px] items-center justify-center">
          <svg width="18" height="18" viewBox="0 0 18 18"><path d="M3 3l11 4-4 2 5 6-2 2-5-6-2 4z" fill="#626d80" /></svg>
        </span>
        {DRAW_A.map((d) => <RailLine key={d} d={d} />)}
        <RailText t="abc" bold />
        {DRAW_B.map((d) => <RailLine key={d} d={d} />)}
        <RailFoot />
      </div>
      <div className="bg-[#bac6d9]">
        <RailDots />
        <RailLine d="M2 8a6 6 0 1 0 12 0a6 6 0 1 0-12 0M5 8h6M8 5v6M13 12l4 3" />
        <RailLine d="M2 8a6 6 0 1 0 12 0a6 6 0 1 0-12 0M5 8h6M13 12l4 3" />
        {['i', 'h', 'd', 'w', 'm'].map((t) => <RailText key={t} t={t} />)}
        <RailFoot />
      </div>
      <div className="bg-[#bac6d9]">
        <RailDots />
        {DRAW_C.map((d) => <RailLine key={d} d={d} />)}
        <RailFoot />
      </div>
    </div>
  )
}

function LeftStatus() {
  const sep = 'flex h-[19px] items-center border-r border-[#c0c8d6]'
  return (
    <div className="flex h-[20px] shrink-0 items-center bg-[#2b3a57] text-[12px] tracking-[-0.3px] text-[#eef1f6]">
      <span className="w-[561px] shrink-0 whitespace-nowrap">For Help, press F1</span>
      <span className={`${sep} w-[15px]`}>X:</span>
      <span className={`${sep} w-[21px] pl-[6px]`}>Y:</span>
      <span className={`${sep} w-[212px] whitespace-nowrap pl-[5px]`}>NYSE, Group 255, Services, Advertising</span>
      <span className={`${sep} w-[33px] pl-[5px]`}>Data</span>
      <span className={`${sep} w-[50px]`} />
      <span className={`${sep} w-[51px] pl-[9px]`}>3708M</span>
      <span className={`${sep} w-[34px] pl-[6px] text-[#7c879b]`}>CAP</span>
      <span className="ml-auto grid grid-cols-3 gap-[1px] pr-[1px]">
        {[0, 1, 2, 3, 4, 5, 6, 7, 8].map((i) => (
          <span key={i} className={`h-[2px] w-[2px] ${[0, 1, 3].includes(i) ? '' : 'bg-[#c8d0de]'}`} />
        ))}
      </span>
    </div>
  )
}

function LeftWindow() {
  return (
    <div className="flex h-full w-[1005px] shrink-0 flex-col">
      <div className="flex h-[29px] shrink-0 items-center bg-white pb-[2px] pl-[4px] text-[13px] tracking-[-0.45px] text-[#8a8a8a]">
        <LogoIcon />
        <span className="ml-[4px]">AmiBroker - [Analysis1]</span>
        <span className="ml-auto flex items-center pr-[15px] text-[#a8a8a8]">
          <Minus size={11} />
          <Square size={11} className="ml-[34px]" />
          <X size={13} className="ml-[33px]" />
        </span>
      </div>
      <TopToolbar />
      <MenuBar />
      <div className="flex min-h-0 flex-1 bg-[#2b3a57]">
        <SideRail />
        <div className="flex min-h-0 w-[951px] shrink-0 flex-col pt-[5px] pb-[7px]">
          <DocTabs />
          <Panel />
        </div>
        <div className="w-[6px] shrink-0" />
        <DrawRail />
      </div>
      <LeftStatus />
    </div>
  )
}

type Tone = 'g' | 'b' | 'r' | ''
type Val = string | [string, Tone]
const g = (s: string): Val => [s, 'g']
const b = (s: string): Val => [s, 'b']
const r = (s: string): Val => [s, 'r']

type StatRow = [string, Val, Val, Val, Val]

const STATS_A: StatRow[] = [
  ['Initial capital', '2000.00', '2000.00', '2000.00', '2000.00'],
  ['Ending capital', '2242.00', '2014.60', '2227.40', '0.00'],
  ['Net Profit', g('242.00'), g('14.60'), g('227.40'), r('-2000.00')],
  ['Net Profit %', g('12.10%'), g('0.73%'), g('11.37%'), r('-100.00%')],
  ['Exposure %', '1.29%', '0.39%', '0.89%', '100.00%'],
  ['Net Risk Adjusted Return %', g('938.72%'), g('184.91%'), g('1271.53%'), r('-100.00%')],
  ['Annual Return %', g('20.36%'), b('1.19%'), g('19.09%'), r('-100.00%')],
  ['Risk Adjusted Return %', g('1579.30%'), b('300.64%'), g('2134.66%'), r('-100.00%')],
  ['Total transaction costs', g('26.80'), g('13.60'), g('13.20'), b('0.00')],
]
const STATS_B: StatRow[] = [
  ['All trades', '67', '34 (50.75 %)', '33 (49.25 %)', '1'],
  ['Avg. Profit/Loss', g('3.61'), g('0.43'), g('6.89'), b('0.00')],
  ['Avg. Profit/Loss %', g('361.19%'), g('42.94%'), g('689.09%'), 'N/A'],
  ['Avg. Bars Held', g('50.69'), g('47.68'), g('53.79'), g('3333.00')],
]
const STATS_C: StatRow[] = [
  ['Winners', '20 (29.85 %)', '12 (17.91 %)', '8 (11.94 %)', '0 (0.00 %)'],
  ['Total Profit', '591.50', '163.50', '428.00', '0.00'],
  ['Avg. Profit', '29.57', '13.62', '53.50', 'N/A'],
  ['Avg. Profit %', '2957.50%', '1362.50%', '5350.00%', 'N/A'],
  ['Avg. Bars Held', '111.00', '81.00', '156.00', 'N/A'],
  ['Max. Consecutive', g('3'), g('2'), g('2'), b('0')],
  ['Largest win', '196.60', '75.80', '196.60', '0.00'],
  ['# bars in largest win', '217', '182', '217', '0'],
]
const STATS_D: StatRow[] = [
  ['Losers', '47 (70.15 %)', '22 (32.84 %)', '25 (37.31 %)', '1 (100.00 %)'],
  ['Total Loss', '-349.50', '-148.90', '-200.60', '0.00'],
  ['Avg. Loss', '-7.44', '-6.77', '-8.02', '0.00'],
  ['Avg. Loss %', '-743.62%', '-676.82%', '-802.40%', 'N/A'],
  ['Avg. Bars Held', '25.02', '29.50', '21.08', '3333.00'],
  ['Max. Consecutive', '7', '6', '12', '1'],
  ['Largest loss', '-25.30', '-25.30', '-23.50', '0.00'],
  ['# bars in largest loss', '33', '33', '22', '0'],
]
const STATS_E: StatRow[] = [
  ['Max. trade drawdown', '-117.20', '-69.00', '-117.20', '0.00'],
  ['Max. trade % drawdown', '-97.74', '-97.74', '-97.73', 'N/A'],
  ['Max. system drawdown', '-191.70', '-90.30', '-236.10', '-2000.00'],
  ['Max. system % drawdown', g('-7.97%'), g('-4.30%'), g('-9.76%'), r('-100.00%')],
  ['Recovery Factor', b('1.26'), r('0.16'), r('0.96'), r('-1.00')],
  ['CAR/MaxDD', g('2.55'), r('0.28'), b('1.96'), r('-1.00')],
  ['RAR/MaxDD', g('198.07'), g('69.99'), g('218.79'), r('-1.00')],
  ['Profit Factor', b('1.69'), b('1.10'), g('2.13'), 'N/A'],
  ['Payoff Ratio', g('3.98'), g('2.01'), g('6.67'), 'N/A'],
  ['Standard Error', '74.44', '19.85', '79.11', '0.00'],
  ['Risk-Reward Ratio', '6.21', '5.34', '4.50', 'N/A'],
  ['Ulcer Index', '4.66', '2.09', '6.02', '100.00'],
  ['Ulcer Performance Index', '3.21', '-2.02', '2.27', '-1.05'],
  ['Sharpe Ratio of trades', '1.19', '0.27', '1.68', 'N/A'],
]

const TONES: Record<Tone, string> = {
  g: 'text-[#007000]',
  b: 'text-[#0000a8]',
  r: 'text-[#a80000]',
  '': 'text-[#111]',
}

function StatCell({ v, w, children }: { v: Val; w: string; children?: ReactNode }) {
  const [text, tone] = typeof v === 'string' ? [v, '' as Tone] : v
  return (
    <div className={`relative ${w} shrink-0 text-right ${TONES[tone]}`}>
      {text}
      {children}
    </div>
  )
}

function Stat({ row, head, indent }: { row: StatRow; head?: boolean; indent?: boolean }) {
  return (
    <div className="flex h-[18px] leading-[18px] whitespace-nowrap">
      <div className={`w-[175px] shrink-0 ${head ? 'font-bold tracking-[-0.15px] text-black' : 'text-[#111]'} ${indent ? 'pl-[2px]' : ''}`}>{row[0]}</div>
      <StatCell v={row[1]} w="w-[120px]">
        {row[0] === 'Net Profit' && (
          <div className="absolute top-[-5px] right-[-7px] h-[29px] w-[59px] border-[4px] border-[#e01b24]" />
        )}
      </StatCell>
      <StatCell v={row[2]} w="w-[103px]" />
      <StatCell v={row[3]} w="w-[108px]" />
      <StatCell v={row[4]} w="w-[348px]" />
    </div>
  )
}

function StatGroup({ rows, headed }: { rows: StatRow[]; headed?: boolean }) {
  return (
    <div>
      {rows.map((row, i) => (
        <Stat key={row[0]} row={row} head={headed && i === 0} indent={headed && i > 0} />
      ))}
    </div>
  )
}

function Rule() {
  return <div className="mt-[9px] mb-[9px] h-[2px] w-[852px] bg-[#a9a9a9]" />
}

function ReportNav() {
  const links = ['Charts', 'Trades', 'Formula', 'Settings', 'Symbols', 'Monte Carlo']
  return (
    <div className="flex h-[18px] justify-center gap-[4px] text-[14px] leading-[18px] tracking-[-0.3px]">
      <span className="font-bold text-[#800080] underline">Statistics</span>
      {links.map((l) => (
        <span key={l} className="flex gap-[4px]">
          <span className="text-[#333]">|</span>
          <span className="text-[#0a5bc4] underline">{l}</span>
        </span>
      ))}
    </div>
  )
}

function RightWindow() {
  return (
    <div className="flex h-full w-[903px] shrink-0 flex-col bg-white text-[12px] tracking-[-0.55px]">
      <div className="flex h-[29px] shrink-0 items-center pb-[5px] pl-[9px] text-[13px] tracking-[-0.45px] text-[#111]">
        <svg width="12" height="15" viewBox="0 0 12 15">
          <path d="M.5 .5h11v14H.5z" fill="#fff" stroke="#333" />
          <path d="M3 3h6M3 6h6M3 9h6M3 12h6" stroke="#222" />
        </svg>
        <span className="ml-[8px]">Formula 2 - Backtest Report - HtmlView</span>
        <span className="ml-auto flex items-center pr-[18px] text-[#222]">
          <Minus size={12} />
          <Square size={11} className="ml-[34px]" />
          <X size={14} className="ml-[32px]" />
        </span>
      </div>
      <div className="flex h-[17px] shrink-0 items-center gap-[17px] pl-[7px] text-[12px] tracking-[-0.2px] text-[#111]">
        <span>File</span>
        <span>Edit</span>
        <span>View</span>
        <span>Help</span>
      </div>
      <div className="flex h-[30px] shrink-0 items-center border-y-2 border-[#a8a8a8] bg-[#f0f0f0] pl-[13px]">
        <FolderIcon />
        <span className="ml-[7px]"><SaveIcon /></span>
        <span className="mx-[7px] h-[22px] w-[1px] bg-[#b0b0b0]" />
        <Printer size={17} color="#111" />
        <span className="mx-[7px] h-[22px] w-[1px] bg-[#b0b0b0]" />
        <svg width="10" height="16" viewBox="0 0 10 16">
          <path d="M1 5c0-5 8-5 8 0 0 3-3 3-3 6H4c0-4 3-3 3-6 0-2-4-2-4 0z" fill="#e6c700" stroke="#222" />
          <rect x="3.5" y="12.500" width="3" height="3" fill="#e6c700" stroke="#222" />
        </svg>
      </div>
      <div className="flex min-h-0 flex-1">
        <div className="w-[1px] shrink-0 bg-[#777]" />
        <div className="w-[883px] shrink-0 overflow-hidden pt-[15px] pr-[11px] pl-[11px]">
          <ReportNav />
          <div className="mt-[11px] flex h-[20px] items-center justify-center bg-[#dcdcdc] text-[14px] font-bold text-[#111]">Statistics</div>
          <div className="mt-[2px] pl-[3px]">
            <div className="flex h-[18px] leading-[18px] font-bold tracking-normal whitespace-nowrap text-black">
              <div className="w-[175px] shrink-0" />
              <div className="w-[120px] shrink-0 text-right">All trades</div>
              <div className="w-[103px] shrink-0 text-right">Long trades</div>
              <div className="w-[108px] shrink-0 text-right">Short trades</div>
              <div className="w-[348px] shrink-0 text-right">Buy&amp;Hold (S50_CON_15M_p-eak_161118)</div>
            </div>
            <StatGroup rows={STATS_A} />
            <Rule />
            <StatGroup rows={STATS_B} headed />
            <Rule />
            <StatGroup rows={STATS_C} headed />
            <Rule />
            <StatGroup rows={STATS_D} headed />
            <Rule />
            <StatGroup rows={STATS_E} />
          </div>
        </div>
        <VScroll w="w-[19px]" top="h-[34px] pt-[10px]" thumb="h-[845px]" bottom="h-[44px]" />
      </div>
      <div className="flex h-[20px] shrink-0 items-end justify-end border-t border-[#dcdcdc] bg-[#f0f0f0] pr-[21px]">
        <span className="h-[16px] w-[29px] border-x border-t border-[#b4b4b4]" />
        <span className="ml-[3px] h-[16px] w-[33px] border-x border-t border-[#b4b4b4]" />
        <span className="ml-[2px] h-[16px] w-[32px] border-x border-t border-[#b4b4b4]" />
      </div>
    </div>
  )
}

export default function App() {
  return (
    <div className="flex h-[1041px] w-[1911px] flex-col overflow-hidden bg-[#111] font-['Liberation_Sans',Arial,sans-serif]">
      <div className="flex h-[1037px] shrink-0">
        <LeftWindow />
        <div className="w-[3px] shrink-0 bg-[#6d6d6d]" />
        <RightWindow />
      </div>
    </div>
  )
}
